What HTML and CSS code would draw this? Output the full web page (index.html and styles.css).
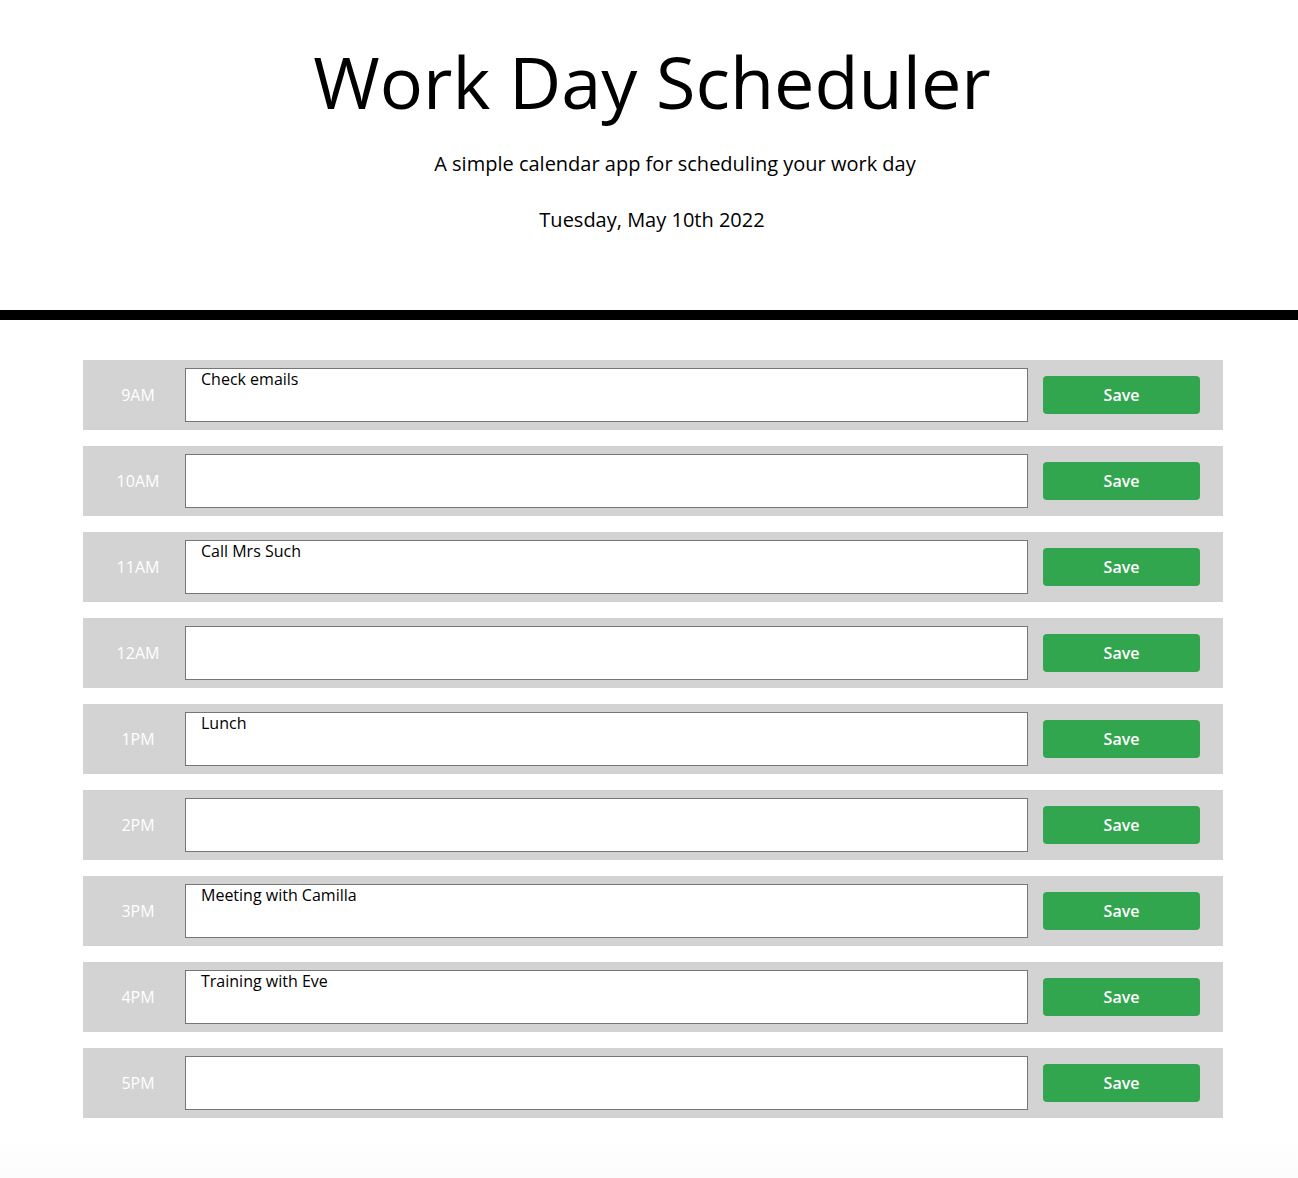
FILE: index.html
```html
<!DOCTYPE html>
<html lang="en">
<head>
<meta charset="utf-8">
<title>Work Day Scheduler</title>
<link rel="stylesheet" href="styles.css">
</head>
<body>
<header class="jumbotron">
  <h1 class="title">Work Day Scheduler</h1>
  <p class="lead">A simple calendar app for scheduling your work day</p>
  <p class="date">Tuesday, May 10th 2022</p>
</header>
<main class="container">
  <div class="time-block"><div class="hour">9AM</div><textarea class="description">Check emails</textarea><button class="saveBtn">Save</button></div>
  <div class="time-block"><div class="hour">10AM</div><textarea class="description"></textarea><button class="saveBtn">Save</button></div>
  <div class="time-block"><div class="hour">11AM</div><textarea class="description">Call Mrs Such</textarea><button class="saveBtn">Save</button></div>
  <div class="time-block"><div class="hour">12AM</div><textarea class="description"></textarea><button class="saveBtn">Save</button></div>
  <div class="time-block"><div class="hour">1PM</div><textarea class="description">Lunch</textarea><button class="saveBtn">Save</button></div>
  <div class="time-block"><div class="hour">2PM</div><textarea class="description"></textarea><button class="saveBtn">Save</button></div>
  <div class="time-block"><div class="hour">3PM</div><textarea class="description">Meeting with Camilla</textarea><button class="saveBtn">Save</button></div>
  <div class="time-block"><div class="hour">4PM</div><textarea class="description">Training with Eve</textarea><button class="saveBtn">Save</button></div>
  <div class="time-block"><div class="hour">5PM</div><textarea class="description"></textarea><button class="saveBtn">Save</button></div>
</main>
<div class="footer-fade"></div>
</body>
</html>
```
FILE: styles.css
```css
html, body {
  margin: 0;
  padding: 0;
  background: #ffffff;
}
body {
  font-family: "Open Sans", "Liberation Sans", sans-serif;
  color: #000;
}
.jumbotron {
  text-align: center;
  padding: 38px 0 75px 6px;
  border-bottom: 10px solid #000;
}
.title {
  font-size: 72px;
  font-weight: 400;
  line-height: 1.2;
  margin: 0 0 25px;
}
.lead {
  font-size: 20px;
  line-height: 1.5;
  margin: 0 0 26px 0;
  padding-left: 46px;
}
.date {
  font-size: 20px;
  line-height: 1.5;
  margin: 0;
}
.container {
  width: 1140px;
  margin: 40px 0 0 83px;
  display: flex;
  flex-direction: column;
  gap: 16px;
}
.time-block {
  display: flex;
  align-items: center;
  height: 70px;
  box-sizing: border-box;
  background: #d3d3d3;
  padding: 8px 23px 8px 0;
}
.hour {
  width: 102px;
  flex: none;
  box-sizing: border-box;
  padding-left: 8px;
  text-align: center;
  color: #ffffff;
  font-size: 16px;
}
.description {
  flex: none;
  width: 843px;
  height: 54px;
  box-sizing: border-box;
  border: 1px solid #767676;
  border-radius: 0;
  padding: 0 15px;
  margin: 0;
  resize: none;
  font-family: "Open Sans", "Liberation Sans", sans-serif;
  font-size: 16px;
  line-height: 1.3;
  color: #000;
  background: #fff;
}
.saveBtn {
  margin-left: 15px;
  width: 157px;
  height: 38px;
  flex: none;
  border: none;
  border-radius: 4px;
  background: #31a64f;
  color: #fff;
  font-family: "Open Sans", "Liberation Sans", sans-serif;
  font-size: 16px;
  font-weight: 600;
  padding: 0;
}
.footer-fade {
  height: 60px;
  background: linear-gradient(#ffffff 30%, #fcfcfc);
}
```
